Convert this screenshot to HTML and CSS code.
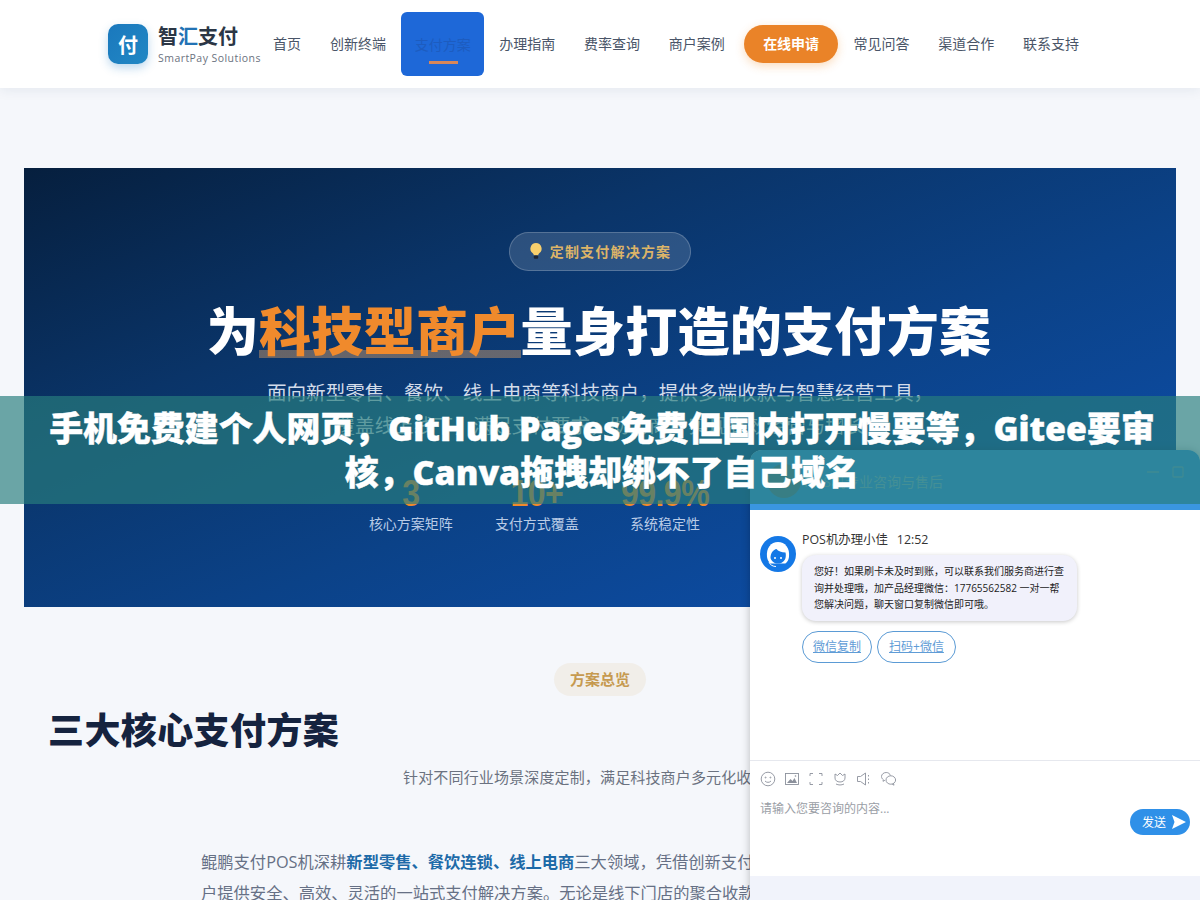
FILE: index.html
```html
<!DOCTYPE html>
<html lang="zh-CN">
<head>
  <meta charset="UTF-8">
  <title>智汇支付 SmartPay Solutions</title>
  <link rel="stylesheet" href="styles.css">
</head>
<body>

  <header class="site-header">
    <a class="logo" href="#">
      <span class="logo-mark">付</span>
      <span class="logo-text">
        <span class="logo-name">智<em>汇</em>支付</span>
        <span class="logo-sub">SmartPay Solutions</span>
      </span>
    </a>
    <nav class="main-nav">
      <a href="#">首页</a>
      <a href="#">创新终端</a>
      <a class="active" href="#">支付方案</a>
      <a href="#">办理指南</a>
      <a href="#">费率查询</a>
      <a href="#">商户案例</a>
      <a class="apply" href="#">在线申请</a>
      <a href="#">常见问答</a>
      <a href="#">渠道合作</a>
      <a href="#">联系支持</a>
    </nav>
  </header>

  <main>
    <!-- Hero -->
    <section class="hero">
      <div class="hero-badge">
        <svg class="bulb" width="14" height="18" viewBox="0 0 14 18">
          <path d="M7 1a5.6 5.6 0 0 0-3.2 10.2c.7.6 1 1.300 1 2.100h4.400c0-.8.3-1.500 1-2.100A5.600 5.600 0 0 0 7 1z" fill="#f7cf6d"/>
          <rect x="4.800" y="13.600" width="4.400" height="3.200" rx="1" fill="#1b2434"/>
        </svg>
        定制支付解决方案
      </div>
      <h1>为<span class="hl">科技型商户</span>量身打造的支付方案</h1>
      <p class="hero-desc">面向新型零售、餐饮、线上电商等科技商户，提供多端收款与智慧经营工具，<br>覆盖线上线下，满足支付要求，助力商户实现高效经营与增长</p>
      <div class="stats">
        <div class="stat"><strong>3</strong><span>核心方案矩阵</span></div>
        <div class="stat"><strong>10+</strong><span>支付方式覆盖</span></div>
        <div class="stat"><strong>99.9%</strong><span>系统稳定性</span></div>
        <div class="stat"><strong>8年</strong><span>行业服务经验</span></div>
      </div>
    </section>

    <!-- Overview -->
    <section class="overview">
      <div class="tag-row"><span class="tag">方案总览</span></div>
      <h2>三大核心支付方案</h2>
      <p class="overview-sub">针对不同行业场景深度定制，满足科技商户多元化收款需求</p>
      <p class="overview-text">鲲鹏支付POS机深耕<b>新型零售、餐饮连锁、线上电商</b>三大领域，凭借创新支付技术，为广大科技商<br>户提供安全、高效、灵活的一站式支付解决方案。无论是线下门店的聚合收款，还是线上商城的订单</p>
    </section>
  </main>

  <!-- Title band over the page -->
  <div class="title-band">
    <p>手机免费建个人网页，GitHub Pages免费但国内打开慢要等，Gitee要审核，Canva拖拽却绑不了自己域名</p>
  </div>

  <!-- Chat window -->
  <aside class="chat">
    <div class="chat-head">
      <span class="chat-head-avatar"></span>
      <span class="chat-head-title">POS机专业咨询与售后</span>
      <span class="chat-head-btns">
        <svg width="12" height="12" viewBox="0 0 12 12"><path d="M0 6h12" stroke="#6fa6c0" stroke-width="1.500"/></svg>
        <svg width="12" height="12" viewBox="0 0 12 12"><rect x="1" y="1" width="10" height="10" rx="1" fill="none" stroke="#6fa6c0" stroke-width="1.300"/></svg>
      </span>
    </div>

    <div class="chat-body">
      <svg class="agent" width="36" height="36" viewBox="0 0 36 36">
        <circle cx="18" cy="18" r="18" fill="#1478e6"/>
        <path d="M7 21C6 12 11 6 18 6s12 6 11 15c-.4 3-1.600 5-3.600 6.500L10.600 27.500C8.600 26 7.400 24 7 21z" fill="#fff"/>
        <path d="M10.500 22c0-5 3-8.500 6-9 1.500 2 5 3.500 9 3.500.4 1.500.5 3.500 0 5.500-1 3.500-4 5.500-7.500 5.500s-6.500-2-7.500-5.500z" fill="#1478e6"/>
        <circle cx="15" cy="22" r="1" fill="#fff"/>
        <circle cx="21" cy="22" r="1" fill="#fff"/>
        <path d="M9 26c1 3 4 4.500 7 4.500" fill="none" stroke="#fff" stroke-width="1"/>
      </svg>
      <div class="msg">
        <div class="msg-name">POS机办理小佳<span>12:52</span></div>
        <div class="bubble">您好！如果刷卡未及时到账，可以联系我们服务商进行查询并处理哦，加产品经理微信：17765562582 一对一帮您解决问题，聊天窗口复制微信即可哦。</div>
        <div class="msg-actions">
          <a href="#">微信复制</a>
          <a href="#">扫码+微信</a>
        </div>
      </div>
    </div>

    <div class="chat-input">
      <div class="tools">
        <svg width="16" height="16" viewBox="0 0 16 16"><circle cx="8" cy="8" r="6.800"/><circle cx="5.600" cy="6.500" r=".5"/><circle cx="10.400" cy="6.500" r=".5"/><path d="M5 10c1.600 1.800 4.400 1.800 6 0"/></svg>
        <svg width="16" height="16" viewBox="0 0 16 16"><rect x="1.500" y="2.500" width="13" height="11"/><path class="solid" d="M3 12l3.500-4 2 2 2-3 2.500 5z"/><circle class="solid" cx="11.500" cy="5" r=".8"/></svg>
        <svg width="16" height="16" viewBox="0 0 16 16"><path d="M2 5V2.500h3M11 2.500h3V5M14 11v2.500h-3M5 13.500H2V11"/></svg>
        <svg width="16" height="16" viewBox="0 0 16 16"><path d="M3 3l2.500 1.500L8 2l2.500 2.500L13 3v4c0 2.500-2.200 4-5 4S3 9.500 3 7z"/><path d="M4 13c2.500 1.300 5.500 1.300 8 0"/></svg>
        <svg width="16" height="16" viewBox="0 0 16 16"><path d="M1.500 5.500h3L9.500 2v12l-5-3.500h-3z"/><path d="M12.500 4v1.500M12.500 7.500V9M12.500 11v1.500"/></svg>
        <svg width="17" height="16" viewBox="0 0 17 16"><path d="M10.500 4.500C10 2.800 8.300 1.500 6.200 1.500 3.600 1.500 1.500 3.300 1.500 5.500c0 1.300.7 2.400 1.800 3.100L3 10.300l1.900-1"/><ellipse cx="10.800" cy="9" rx="4.800" ry="4.200"/><path d="M13.500 12.500l.5 1.700-1.900-1.200"/></svg>
      </div>
      <div class="placeholder">请输入您要咨询的内容...</div>
      <a class="send" href="#">发送
        <svg width="14" height="14" viewBox="0 0 14 14"><path d="M0 0l14 7-14 7 2.500-7z" fill="#fff"/></svg>
      </a>
    </div>
    <div class="chat-foot"></div>
  </aside>

</body>
</html>
```

FILE: styles.css
```css
* {
  margin: 0;
  padding: 0;
  box-sizing: border-box;
}

html, body {
  height: 900px;
  overflow: hidden;
}

body {
  position: relative;
  font-family: "Open Sans", "Noto Sans CJK SC", sans-serif;
  background: #f5f7fb;
  color: #4a5568;
}

a {
  text-decoration: none;
  color: inherit;
}

.site-header {
  display: flex;
  align-items: center;
  height: 88px;
  padding-left: 108px;
  background: #fff;
  box-shadow: 0 2px 12px rgba(30, 50, 90, 0.08);
}

.logo {
  display: flex;
  align-items: center;
  gap: 10px;
}

.logo-mark {
  display: flex;
  align-items: center;
  justify-content: center;
  width: 40px;
  height: 40px;
  border-radius: 10px;
  background: linear-gradient(135deg, #1a78bd, #2288c4);
  box-shadow: 0 4px 10px rgba(40, 130, 200, 0.3);
  color: #fff;
  font-size: 20px;
  font-weight: 700;
}

.logo-text {
  display: flex;
  flex-direction: column;
}

.logo-name {
  font-size: 20px;
  font-weight: 700;
  line-height: 28px;
  color: #2b3645;
}

.logo-name em {
  font-style: normal;
  color: #2272b4;
}

.logo-sub {
  font-size: 10.500px;
  line-height: 15px;
  letter-spacing: 0.450px;
  color: #6b7280;
}

.main-nav {
  display: flex;
  align-items: center;
  margin-left: -2.200px;
}

.main-nav a {
  position: relative;
  top: -1px;
  padding: 0 14.400px;
  font-size: 14px;
  color: #4a5568;
}

.main-nav a.active {
  display: flex;
  align-items: center;
  justify-content: center;
  top: 0;
  height: 64px;
  margin: 0 0.500px 0 1px;
  padding: 0 13.500px;
  border-radius: 6px;
  background: #1e68d8;
  color: #1d5cbf;
}

.main-nav a.active::after {
  content: "";
  position: absolute;
  left: 28px;
  bottom: 12px;
  width: 29px;
  height: 3px;
  background: #d8875a;
}

.main-nav a.apply {
  top: 0;
  margin: 0 1px 0 5px;
  padding: 0 19px;
  height: 38px;
  line-height: 37px;
  border-radius: 19px;
  background: #ea8328;
  box-shadow: 0 3px 10px rgba(240, 140, 40, 0.3);
  color: #fff;
  font-weight: 700;
}

.hero {
  margin: 80px 24px 0;
  height: 439px;
  padding-top: 64px;
  text-align: center;
  background: linear-gradient(158deg, #061f3e 0%, #0a3468 30%, #0b4288 58%, #0d4da6 88%, #0c4796 100%);
  color: #fff;
}

.hero-badge {
  display: inline-flex;
  align-items: center;
  gap: 7px;
  height: 39px;
  padding: 0 19px 2px;
  border: 1px solid rgba(255, 255, 255, 0.2);
  border-radius: 20px;
  background: rgba(255, 255, 255, 0.14);
  color: #dcb468;
  font-size: 14px;
  font-weight: 700;
  letter-spacing: 1.200px;
}

.hero h1 {
  margin-top: 24px;
  padding-right: 2px;
  font-size: 52px;
  font-weight: 900;
  line-height: 72px;
  letter-spacing: 0.300px;
}

.hl {
  color: #f08a2c;
  background: linear-gradient(transparent 78%, rgba(240, 170, 100, 0.4) 78%, rgba(240, 170, 100, 0.4) 89%, transparent 89%);
}

.hero-desc {
  margin-top: 9px;
  font-size: 19.600px;
  line-height: 33px;
  color: #d3dcea;
}

.stats {
  display: flex;
  justify-content: center;
  gap: 42px;
  margin-top: 25px;
  padding-left: 4px;
}

.stat {
  display: flex;
  flex-direction: column;
  align-items: center;
}

.stat strong {
  font-family: "Liberation Sans", "Noto Sans CJK SC", sans-serif;
  font-size: 32px;
  line-height: 44px;
  letter-spacing: -0.500px;
  color: #f08a2c;
  transform: translateY(4px) scaleY(1.180);
}

.stat span {
  margin-top: 2px;
  font-size: 14px;
  color: #b9cbe6;
}

.overview {
  padding: 56px 24px 0;
}

.tag-row {
  text-align: center;
}

.tag {
  display: inline-block;
  height: 33px;
  padding: 0 16px;
  line-height: 33px;
  border-radius: 17px;
  background: #f1eee9;
  color: #c69a50;
  font-size: 15px;
  font-weight: 700;
}

.overview h2 {
  margin-top: 10px;
  padding-left: 24px;
  font-size: 36px;
  font-weight: 900;
  line-height: 50px;
  letter-spacing: 0.400px;
  color: #15233f;
}

.overview-sub {
  margin-top: 10px;
  text-align: center;
  font-size: 15px;
  letter-spacing: 0.150px;
  color: #6b7280;
}

.overview-text {
  width: 798px;
  margin: 60px auto 0;
  font-size: 16.300px;
  line-height: 31px;
  color: #667085;
}

.overview-text b {
  color: #1d6aa8;
}

.title-band {
  position: absolute;
  z-index: 5;
  left: 0;
  top: 396px;
  width: 100%;
  height: 108px;
  padding: 10px 40px 0 44px;
  background: rgba(40, 125, 125, 0.68);
}

.title-band p {
  text-align: center;
  font-size: 33.900px;
  font-weight: 900;
  line-height: 44px;
  color: #fff;
  -webkit-text-stroke: 0.400px #fff;
}

.chat {
  position: absolute;
  z-index: 3;
  left: 750px;
  top: 450px;
  width: 450px;
  height: 450px;
  display: flex;
  flex-direction: column;
  border-radius: 12px 12px 0 0;
  background: #fff;
  box-shadow: 0 0 8px rgba(0, 0, 0, 0.25);
  overflow: hidden;
}

.chat-head {
  display: flex;
  align-items: center;
  height: 60px;
  padding: 0 16px 0 17px;
  background: #3a96e0;
}

.chat-head-avatar {
  width: 34px;
  height: 34px;
  margin-top: 2px;
  border-radius: 50%;
  background: #5c7f94;
}

.chat-head-title {
  margin: 2px 0 0 3px;
  font-size: 14px;
  color: #7fb5c8;
}

.chat-head-btns {
  display: flex;
  gap: 13px;
  margin: -16px 0 0 auto;
}

.chat-body {
  display: flex;
  flex: 1;
  gap: 6px;
  padding: 26px 10px 0;
}

.msg-name {
  font-size: 12.400px;
  line-height: 18px;
  margin-top: -5px;
  color: #333;
}

.msg-name span {
  margin-left: 9px;
}

.bubble {
  width: 275px;
  margin-top: 6px;
  padding: 8px 12px;
  border-radius: 14px;
  background: #f1f1fb;
  box-shadow: 0 1px 4px rgba(0, 0, 0, 0.22);
  font-size: 10px;
  line-height: 16.500px;
  color: #222;
}

.msg-actions {
  display: flex;
  gap: 5px;
  margin-top: 10px;
}

.msg-actions a {
  height: 32px;
  padding: 0 10px;
  line-height: 30px;
  border: 1px solid #5b9bd5;
  border-radius: 16px;
  font-size: 12px;
  color: #5f9cd6;
  text-decoration: underline;
}

.msg-actions a:last-child {
  padding: 0 11px;
}

.chat-input {
  position: relative;
  height: 116px;
  padding: 10px 10px 0;
  border-top: 1px solid #e6e8ee;
}

.tools {
  display: flex;
  gap: 8px;
}

.tools svg {
  fill: none;
  stroke: #8c919c;
  stroke-width: 0.900;
}

.tools .solid {
  fill: #8c919c;
  stroke: none;
}

.placeholder {
  margin-top: 12px;
  font-size: 12px;
  color: #9a9ea6;
}

.send {
  position: absolute;
  right: 10px;
  top: 48px;
  display: flex;
  align-items: center;
  gap: 6px;
  height: 26px;
  padding: 0 4px 0 12px;
  border-radius: 13px;
  background: #2f90e8;
  color: #fff;
  font-size: 12px;
}

.chat-foot {
  height: 24px;
  background: #f1f3fb;
}
```
